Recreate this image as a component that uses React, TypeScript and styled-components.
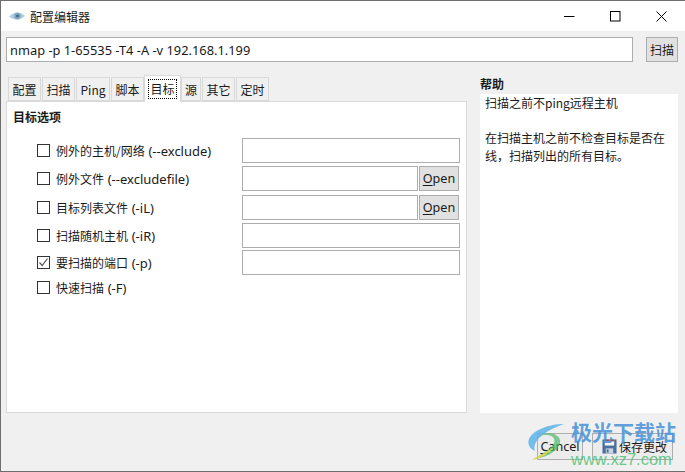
import React from 'react'
import styled, { createGlobalStyle } from 'styled-components'

const uiFont = `"Noto Sans CJK SC", "Noto Sans", sans-serif`

const GlobalStyle = createGlobalStyle`
  html, body {
    margin: 0;
    padding: 0;
    background: #f0f0f0;
  }
  * {
    box-sizing: border-box;
  }
`

const Window = styled.div`
  position: relative;
  width: 685px;
  height: 472px;
  overflow: hidden;
  display: flex;
  flex-direction: column;
  background: #f0f0f0;
  border-top: 1px solid #6e6e6e;
  border-left: 1px solid #6e6e6e;
  border-bottom: 1px solid #6e6e6e;
  font-family: ${uiFont};
  font-size: 12px;
  color: #1a1a1a;
`

const Latin = styled.span`
  font-family: "Noto Sans", sans-serif;
  font-size: 12.6px;
`

const CommandText = styled(Latin)`
  font-size: 12.85px;
`

const Flag = styled(Latin)`
  font-size: 13px;
  margin-left: 1px;
`

const TitleBar = styled.div`
  height: 30px;
  flex: none;
  display: flex;
  align-items: center;
  background: #fff;
  padding-left: 8px;
`

const Title = styled.span`
  margin-left: 5px;
  font-size: 12px;
`

const WindowButtons = styled.div`
  margin-left: auto;
  display: flex;
  padding-right: 1px;
`

const WindowButton = styled.div`
  width: 46px;
  height: 30px;
  display: flex;
  align-items: center;
  justify-content: center;
`

const CommandRow = styled.div`
  flex: none;
  display: flex;
  padding: 6px 7px 0 5px;
  justify-content: space-between;
`

const TextBox = styled.div<{ $width: number }>`
  width: ${({ $width }) => $width}px;
  height: 25px;
  background: #fff;
  border: 1px solid #adadad;
  display: flex;
  align-items: center;
  padding-left: 3px;
  white-space: nowrap;
`

const PushButton = styled.div<{ $width: number }>`
  width: ${({ $width }) => $width}px;
  height: 25px;
  flex: none;
  display: flex;
  align-items: center;
  justify-content: center;
  background: #e1e1e1;
  border: 1px solid #adadad;
  u {
    text-underline-offset: 2px;
  }
`

const Body = styled.div`
  flex: none;
  height: 351px;
  display: flex;
  padding: 13px 7px 0 5px;
`

const LeftColumn = styled.div`
  width: 461px;
  display: flex;
  flex-direction: column;
`

const TabBar = styled.div`
  height: 26px;
  flex: none;
  display: flex;
  align-items: flex-end;
  padding-left: 2px;
`

const Tab = styled.div<{ $width: number; $active?: boolean; $flush?: boolean }>`
  position: relative;
  z-index: ${({ $active }) => ($active ? 1 : 0)};
  width: ${({ $width }) => $width}px;
  height: ${({ $active }) => ($active ? 27 : 24)}px;
  margin-bottom: ${({ $active }) => ($active ? -1 : 0)}px;
  margin-right: ${({ $flush }) => ($flush ? 0 : 1)}px;
  display: flex;
  align-items: center;
  justify-content: center;
  background: ${({ $active }) => ($active ? '#fff' : '#f0f0f0')};
  border: 1px solid #d9d9d9;
  border-bottom: ${({ $active }) => ($active ? 'none' : '1px solid #d9d9d9')};
`

const FocusLabel = styled.span`
  outline: 1px dotted #000;
  padding: 1px;
  line-height: 16px;
`

const TabPanel = styled.div`
  flex: none;
  height: 312px;
  background: #fff;
  border: 1px solid #d9d9d9;
  padding: 6px 6px 0 6px;
`

const GroupTitle = styled.div`
  font-weight: 700;
  height: 30px;
`

const OptionGrid = styled.div`
  display: grid;
  grid-template-columns: 205px 1fr;
  grid-template-rows: 28px 29px 28px 27px 25px 25px;
  padding-left: 24px;
`

const OptionLabel = styled.label`
  display: flex;
  align-items: center;
  height: 25px;
  gap: 6px;
  white-space: nowrap;
`

const CheckBox = styled.span`
  width: 13px;
  height: 13px;
  flex: none;
  display: flex;
  align-items: center;
  justify-content: center;
  background: #fff;
  border: 1px solid #333;
`

const FieldRow = styled.div`
  display: flex;
  gap: 1px;
  height: 25px;
`

const HelpColumn = styled.div`
  margin-left: 13px;
  width: 198px;
  display: flex;
  flex-direction: column;
`

const HelpTitle = styled.div`
  font-weight: 700;
  height: 20px;
  line-height: 20px;
  margin-top: -1px;
`

const HelpBox = styled.div`
  flex: none;
  height: 319px;
  background: #fff;
  padding: 0 5px;
  line-height: 17.5px;
`

const Footer = styled.div`
  flex: none;
  display: flex;
  justify-content: flex-end;
  gap: 9px;
  padding: 20px 12px 0 0;
`

const FooterButton = styled(PushButton)`
  height: 27px;
  background: #ececec;
`

const SaveButton = styled(FooterButton)`
  gap: 2px;
  padding-left: 4px;
`

const Watermark = styled.div`
  position: absolute;
  left: 526px;
  top: 420px;
  width: 159px;
  height: 52px;
  pointer-events: none;
`

const WatermarkLogo = styled.svg`
  position: absolute;
  left: 0;
  top: 2px;
`

const WatermarkTitle = styled.div`
  position: absolute;
  left: 44px;
  top: -4px;
  font-family: "Noto Sans CJK SC", sans-serif;
  font-size: 21px;
  font-weight: 700;
  line-height: 28px;
  white-space: nowrap;
  color: rgba(70, 145, 215, 0.85);
`

const WatermarkUrl = styled.div`
  position: absolute;
  left: 44px;
  top: 29px;
  font-family: "Liberation Sans", sans-serif;
  font-size: 16.5px;
  line-height: 18px;
  white-space: nowrap;
  color: rgba(70, 190, 110, 0.8);
`

const options = [
  { label: '例外的主机/网络', flag: '(--exclude)', field: 'text' },
  { label: '例外文件', flag: '(--excludefile)', field: 'open' },
  { label: '目标列表文件', flag: '(-iL)', field: 'open' },
  { label: '扫描随机主机', flag: '(-iR)', field: 'text' },
  { label: '要扫描的端口', flag: '(-p)', field: 'text', checked: true },
  { label: '快速扫描', flag: '(-F)', field: 'none' },
]

const tabs = [
  { name: '配置', width: 33 },
  { name: '扫描', width: 33 },
  { name: 'Ping', width: 34 },
  { name: '脚本', width: 33, flush: true },
  { name: '目标', width: 37, active: true },
  { name: '源', width: 20 },
  { name: '其它', width: 33 },
  { name: '定时', width: 33 },
]

const EyeIcon = () => (
  <svg width="16" height="16" viewBox="0 0 16 16">
    <path d="M0 8.5 C4 3.5 12 3.5 16 8 C12 12.5 4 12.5 0 8.5Z" fill="#b5cfe0" />
    <circle cx="8.5" cy="8" r="3.4" fill="#7fa8c2" />
    <circle cx="8.5" cy="8" r="1.3" fill="#3c6078" />
  </svg>
)

const SaveIcon = () => (
  <svg width="15" height="15" viewBox="0 0 16 16">
    <path d="M0.5 0.5 H15.5 V15.5 H0.5Z" fill="#4a6f9c" />
    <rect x="3" y="0.5" width="10" height="6.5" fill="#f3f3f3" />
    <rect x="3" y="0.5" width="10" height="2" fill="#d8343a" />
    <rect x="4" y="10" width="8" height="5.5" fill="#c9d4e0" />
    <rect x="5" y="11" width="2" height="3.5" fill="#4a6f9c" />
  </svg>
)

export default function App() {
  return (
    <>
      <GlobalStyle />
      <Window>
        <TitleBar>
          <EyeIcon />
          <Title>配置编辑器</Title>
          <WindowButtons>
            <WindowButton>
              <svg width="11" height="11" viewBox="0 0 11 11">
                <path d="M0 5.5H10.5" stroke="#000" fill="none" />
              </svg>
            </WindowButton>
            <WindowButton>
              <svg width="11" height="11" viewBox="0 0 11 11">
                <rect x="0.5" y="0.5" width="9.5" height="9.5" stroke="#000" fill="none" />
              </svg>
            </WindowButton>
            <WindowButton>
              <svg width="11" height="11" viewBox="0 0 11 11">
                <path d="M0.5 0.5L10.5 10.5M10.5 0.5L0.5 10.5" stroke="#000" fill="none" />
              </svg>
            </WindowButton>
          </WindowButtons>
        </TitleBar>
        <CommandRow>
          <TextBox $width={627}>
            <CommandText>nmap -p 1-65535 -T4 -A -v 192.168.1.199</CommandText>
          </TextBox>
          <PushButton $width={32}>扫描</PushButton>
        </CommandRow>
        <Body>
          <LeftColumn>
            <TabBar>
              {tabs.map((tab) => (
                <Tab key={tab.name} $width={tab.width} $active={tab.active} $flush={tab.flush || tab.active}>
                  {tab.active ? <FocusLabel>{tab.name}</FocusLabel> : tab.name}
                </Tab>
              ))}
            </TabBar>
            <TabPanel>
              <GroupTitle>目标选项</GroupTitle>
              <OptionGrid>
                {options.map((option) => (
                  <React.Fragment key={option.label}>
                    <OptionLabel>
                      <CheckBox>
                        {option.checked && (
                          <svg width="11" height="11" viewBox="0 0 11 11">
                            <path d="M1.5 5.5L4.2 8.5L9.5 1.5" stroke="#555" strokeWidth="1.2" fill="none" />
                          </svg>
                        )}
                      </CheckBox>
                      <span>{option.label} <Flag>{option.flag}</Flag></span>
                    </OptionLabel>
                    <FieldRow>
                      {option.field === 'text' && <TextBox $width={218} />}
                      {option.field === 'open' && (
                        <>
                          <TextBox $width={176} />
                          <PushButton $width={40}>
                            <Latin><u>O</u>pen</Latin>
                          </PushButton>
                        </>
                      )}
                    </FieldRow>
                  </React.Fragment>
                ))}
              </OptionGrid>
            </TabPanel>
          </LeftColumn>
          <HelpColumn>
            <HelpTitle>帮助</HelpTitle>
            <HelpBox>
              扫描之前不ping远程主机
              <br />
              <br />
              在扫描主机之前不检查目标是否在线，扫描列出的所有目标。
            </HelpBox>
          </HelpColumn>
        </Body>
        <Footer>
          <FooterButton $width={46}>
            <Latin><u>C</u>ancel</Latin>
          </FooterButton>
          <SaveButton $width={81}>
            <SaveIcon />
            保存更改
          </SaveButton>
        </Footer>
        <Watermark>
          <WatermarkLogo width="38" height="38" viewBox="0 0 38 38">
            <path d="M37 1 C22 1 6 7 2 16 C0 21 3 26 8 28 C5 20 14 9 37 1Z" fill="#5db4ea" opacity="0.85" />
            <path d="M10 14 C18 10 30 12 27 20 C24 27 14 31 7 36 C16 35 30 30 33 20 C35 12 22 6 10 14Z" fill="#4aba6a" opacity="0.7" />
            <path d="M6 36 C12 32 20 29 27 24 C22 31 14 35 6 37Z" fill="#e6d94a" opacity="0.85" />
          </WatermarkLogo>
          <WatermarkTitle>极光下载站</WatermarkTitle>
          <WatermarkUrl>www.xz7.com</WatermarkUrl>
        </Watermark>
      </Window>
    </>
  )
}
